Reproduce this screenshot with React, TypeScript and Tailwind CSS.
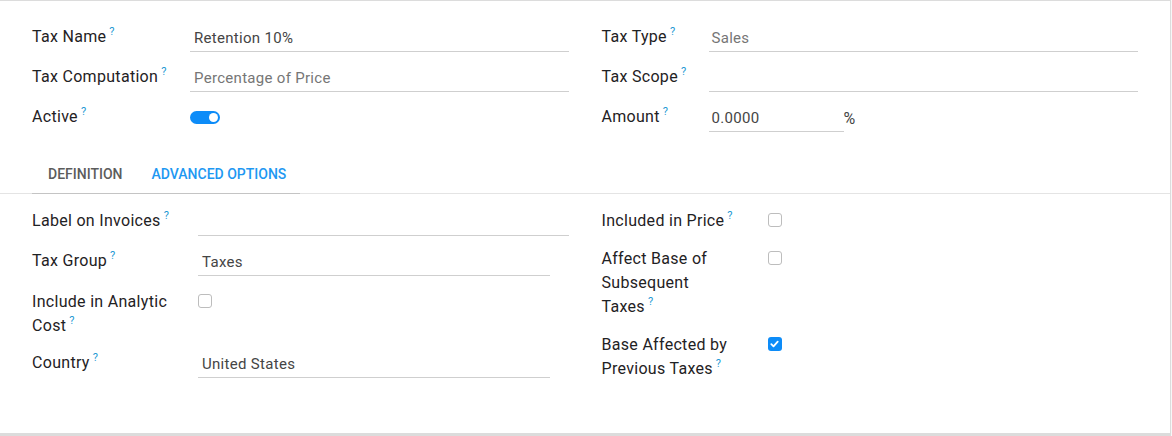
import type { ReactNode } from 'react';

function Help() {
  return <span className="ml-[3px] align-top text-[11px] leading-[13px] tracking-normal text-[#2398d3]">?</span>;
}

function Label({ children, w, help = true }: { children: ReactNode; w: string; help?: boolean }) {
  return (
    <div className={`${w} shrink-0 text-[16px] leading-6 tracking-[0.3px] text-[#1f2224]`}>
      {children}
      {help && <Help />}
    </div>
  );
}

function Input({ value, muted = false, w = 'flex-1', pl = 'pl-1' }: { value?: string; muted?: boolean; w?: string; pl?: string }) {
  return (
    <div className={`${w} h-[27px] border-b border-[#cfcfcf] ${pl} text-[15px] leading-[27px] tracking-[0.3px] ${muted ? 'text-[#767676]' : 'text-[#454545]'}`}>
      {value}
    </div>
  );
}

function Checkbox({ checked = false }: { checked?: boolean }) {
  if (checked)
    return (
      <div className="mt-[4px] flex h-[14px] w-[14px] items-center justify-center rounded-[3px] bg-[#0d8cf8]">
        <svg width="9" height="8" viewBox="0 0 9 8">
          <path d="M1.3 4.2 3.5 6.3 7.7 1.7" fill="none" stroke="white" strokeWidth="1.8" strokeLinecap="round" strokeLinejoin="round" />
        </svg>
      </div>
    );
  return <div className="mt-1 h-[14px] w-[14px] rounded-[3px] border border-[#bdbdbd] bg-white" />;
}

export default function App() {
  return (
    <div className="h-[436px] w-[1172px] bg-white font-[Roboto,sans-serif]">
      <div className="h-[436px] w-[1171px] border-t border-r border-b-[3px] border-[#dcdcdc] shadow-[1px_0_2px_rgba(0,0,0,0.05)]">
        {/* Main fields */}
        <div className="grid grid-cols-2 gap-x-[33px] pl-8 pr-[32px] pt-6">
          <div>
            <div className="mb-[13px] flex">
              <Label w="w-[158px]">Tax Name</Label>
              <Input value="Retention 10%" />
            </div>
            <div className="mb-[13px] flex">
              <Label w="w-[158px]">Tax Computation</Label>
              <Input value="Percentage of Price" muted />
            </div>
            <div className="mb-[13px] flex h-[27px]">
              <Label w="w-[158px]">Active</Label>
              <div className="mt-[6px] flex h-[13px] w-[30px] items-center justify-end rounded-full bg-[#0d8cf8] pr-[2px]">
                <div className="h-[9px] w-[9px] rounded-full bg-white" />
              </div>
            </div>
          </div>
          <div>
            <div className="mb-[13px] flex">
              <Label w="w-[107px]">Tax Type</Label>
              <Input value="Sales" muted pl="pl-[3px]" />
            </div>
            <div className="mb-[13px] flex">
              <Label w="w-[107px]">Tax Scope</Label>
              <Input />
            </div>
            <div className="mb-[13px] flex">
              <Label w="w-[107px]">Amount</Label>
              <Input value="0.0000" w="w-[135px]" pl="pl-[3px]" />
              <span className="text-[16px] leading-[27px] text-[#454545]">%</span>
            </div>
          </div>
        </div>

        {/* Tabs */}
        <div className="mt-[11px] border-b border-[#e4e4e4]">
          <ul className="-mb-px ml-8 flex w-[268px] border-b border-[#c4c4c4]">
            <li className="px-4 py-[10px] text-[14px] font-medium uppercase leading-[17px] text-[#5c5c5c]">Definition</li>
            <li className="px-[13px] py-[10px] text-[14px] font-medium uppercase leading-[17px] text-[#1e98f2]">Advanced Options</li>
          </ul>
        </div>

        {/* Advanced options */}
        <div className="mt-[15px] grid grid-cols-2 gap-x-[33px] pl-8 pr-[32px]">
          <div>
            <div className="mb-[13px] flex">
              <Label w="w-[166px]">Label on Invoices</Label>
              <Input />
            </div>
            <div className="mb-[14px] flex">
              <Label w="w-[166px]">Tax Group</Label>
              <Input value="Taxes" w="w-[352px]" />
            </div>
            <div className="mb-[13px] flex">
              <Label w="w-[166px]">
                Include in Analytic
                <br />
                Cost
              </Label>
              <Checkbox />
            </div>
            <div className="flex">
              <Label w="w-[166px]">Country</Label>
              <Input value="United States" w="w-[352px]" />
            </div>
          </div>
          <div>
            <div className="mb-[14px] flex">
              <Label w="w-[166px]">Included in Price</Label>
              <Checkbox />
            </div>
            <div className="mb-[14px] flex">
              <Label w="w-[166px]">
                Affect Base of
                <br />
                Subsequent
                <br />
                Taxes
              </Label>
              <Checkbox />
            </div>
            <div className="flex">
              <Label w="w-[166px]">
                Base Affected by
                <br />
                Previous Taxes
              </Label>
              <Checkbox checked />
            </div>
          </div>
        </div>
      </div>
    </div>
  );
}
